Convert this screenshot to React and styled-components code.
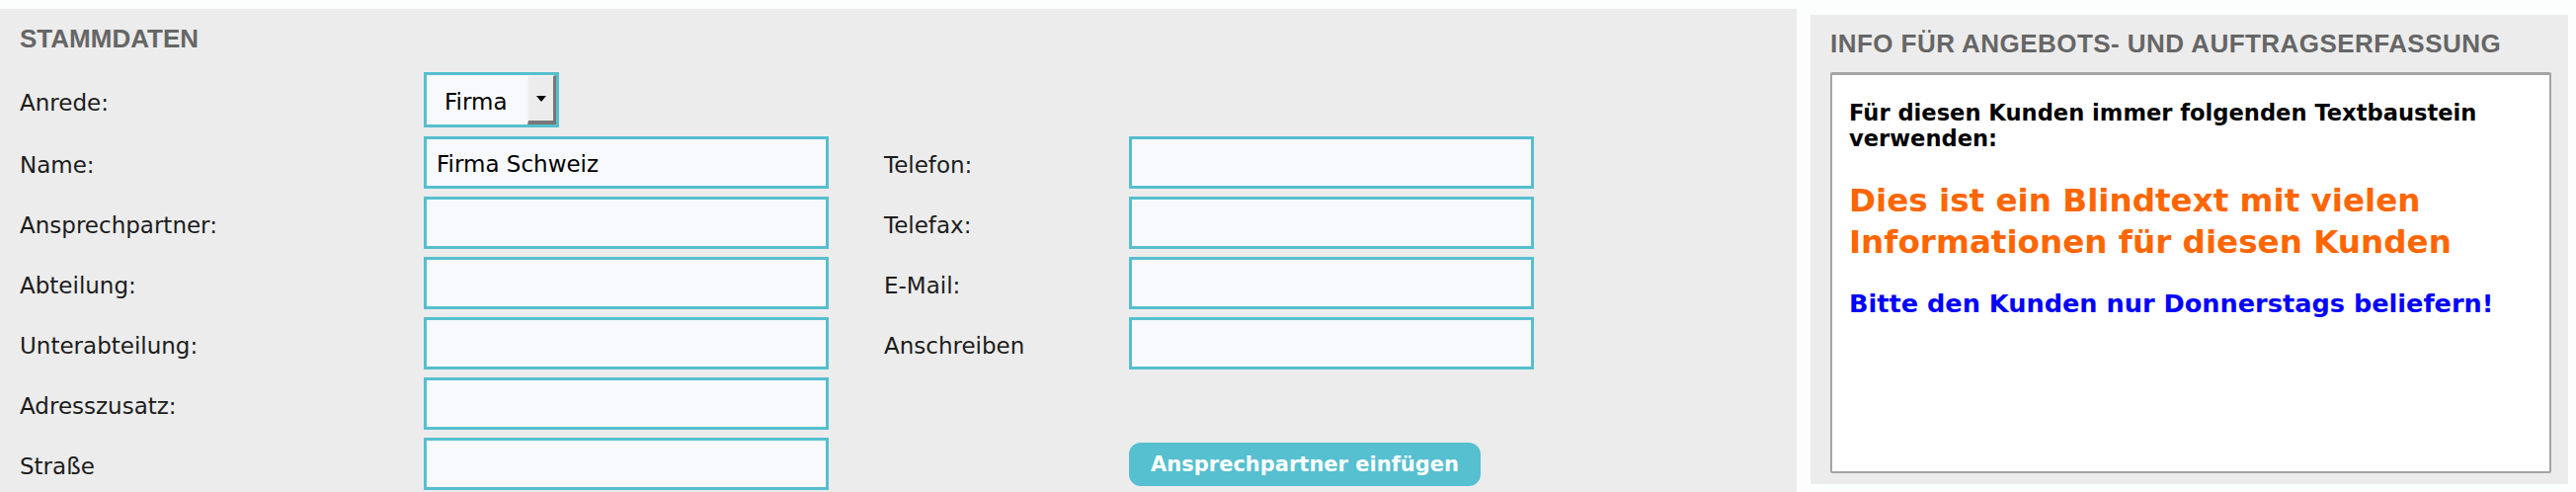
import React from "react";
import styled, { createGlobalStyle } from "styled-components";

const GlobalStyle = createGlobalStyle`
  html, body { margin: 0; padding: 0; background: #fcfdfd; }
  body { font-family: "DejaVu Sans", Verdana, sans-serif; }
  * { box-sizing: border-box; }
`;

const Page = styled.div`
  display: flex;
  align-items: flex-start;
  gap: 14px;
  padding-top: 9px;
  width: 2608px;
`;

const LeftPanel = styled.section`
  width: 1819px;
  flex: none;
  background: #ececec;
  padding: 15px 0 24px 20px;
`;

const RightPanel = styled.section`
  width: 767px;
  flex: none;
  margin-top: 6px;
  background: #ececec;
  padding: 14px 17px 11px 20px;
`;

const SectionTitle = styled.h2`
  margin: 0;
  font-family: "Liberation Sans", Arial, Helvetica, sans-serif;
  font-weight: 700;
  font-size: 26px;
  line-height: 30px;
  color: #666666;
  letter-spacing: ${(p) => p.$ls || 0}px;
`;

const Form = styled.div`
  margin-top: 19px;
  display: flex;
  flex-direction: column;
  gap: 8px;
`;

const Row = styled.div`
  display: grid;
  grid-template-columns: 409px 410px 304px 410px;
  height: ${(p) => p.$h || 53}px;
  align-items: center;
`;

const Label = styled.div`
  font-family: "DejaVu Sans", Verdana, sans-serif;
  font-size: 23px;
  color: #1c1c1c;
  padding-top: 4px;
  padding-left: ${(p) => (p.$second ? 56 : 0)}px;
  white-space: nowrap;
`;

const TextInput = styled.input`
  width: 410px;
  height: 53px;
  border: 3px solid #56bfcf;
  background: #f7f9fd;
  font-family: "DejaVu Sans", Verdana, sans-serif;
  font-size: 23px;
  color: #000;
  padding: 2px 10px 0;
  margin: 0;
  outline: none;
  border-radius: 0;
`;

const SelectBox = styled.div`
  width: 137px;
  height: 56px;
  align-self: start;
  border: 3px solid #56bfcf;
  background: #f7f9fd;
  display: flex;
  align-items: center;
  font-family: "DejaVu Sans", Verdana, sans-serif;
  font-size: 23px;
  color: #000;
`;

const SelectText = styled.span`
  padding-left: 18px;
  padding-top: 3px;
  flex: 1;
`;

const DropButton = styled.span`
  width: 29px;
  height: 50px;
  align-self: flex-end;
  background: #ececec;
  border-top: 1px solid #f4f4f4;
  border-left: 1px solid #f4f4f4;
  border-right: 3px solid #777;
  border-bottom: 4px solid #777;
  display: flex;
  align-items: center;
  justify-content: center;
`;

const ActionButton = styled.button`
  width: 356px;
  height: 44px;
  margin: 0;
  padding: 0;
  border: none;
  border-radius: 12px;
  background: #56bfd0;
  color: #fff;
  font-family: "DejaVu Sans", Verdana, sans-serif;
  font-weight: 700;
  font-size: 21px;
  cursor: pointer;
`;

const InfoBox = styled.div`
  margin-top: 14px;
  height: 406px;
  background: #fff;
  border: 2px solid #a4a4a4;
  border-top-width: 3px;
  border-radius: 2px;
  padding: 25px 17px 0 17px;
  font-family: "DejaVu Sans", Verdana, sans-serif;
  font-weight: 700;
`;

const InfoText = styled.p`
  margin: ${(p) => p.$mt || 0}px 0 0;
  font-size: ${(p) => p.$size}px;
  line-height: ${(p) => p.$lh}px;
  color: ${(p) => p.$color};
`;

const Arrow = () => (
  <svg width="10" height="6" viewBox="0 0 10 6">
    <polygon points="0,0 10,0 5,6" fill="#000" />
  </svg>
);

const rows = [
  { label: "Name:", value: "Firma Schweiz", label2: "Telefon:", field2: "input" },
  { label: "Ansprechpartner:", label2: "Telefax:", field2: "input" },
  { label: "Abteilung:", label2: "E-Mail:", field2: "input" },
  { label: "Unterabteilung:", label2: "Anschreiben", field2: "input" },
  { label: "Adresszusatz:" },
  { label: "Straße", field2: "button" },
];

export default function App() {
  return (
    <>
      <GlobalStyle />
      <Page>
        <LeftPanel>
          <SectionTitle>STAMMDATEN</SectionTitle>
          <Form>
            <Row $h={57}>
              <Label>Anrede:</Label>
              <SelectBox>
                <SelectText>Firma</SelectText>
                <DropButton>
                  <Arrow />
                </DropButton>
              </SelectBox>
            </Row>
            {rows.map((r) => (
              <Row key={r.label}>
                <Label>{r.label}</Label>
                <TextInput readOnly defaultValue={r.value || ""} />
                <Label $second>{r.label2 || ""}</Label>
                {r.field2 === "input" && <TextInput readOnly defaultValue="" />}
                {r.field2 === "button" && (
                  <ActionButton type="button">Ansprechpartner einfügen</ActionButton>
                )}
              </Row>
            ))}
          </Form>
        </LeftPanel>
        <RightPanel>
          <SectionTitle $ls={0.45}>INFO FÜR ANGEBOTS- UND AUFTRAGSERFASSUNG</SectionTitle>
          <InfoBox>
            <InfoText $size={22.6} $lh={26} $color="#000">
              Für diesen Kunden immer folgenden Textbaustein verwenden:
            </InfoText>
            <InfoText $size={32.6} $lh={42} $color="#ff6600" $mt={29}>
              Dies ist ein Blindtext mit vielen Informationen für diesen Kunden
            </InfoText>
            <InfoText $size={25.6} $lh={30} $color="#0000ff" $mt={26}>
              Bitte den Kunden nur Donnerstags beliefern!
            </InfoText>
          </InfoBox>
        </RightPanel>
      </Page>
    </>
  );
}
